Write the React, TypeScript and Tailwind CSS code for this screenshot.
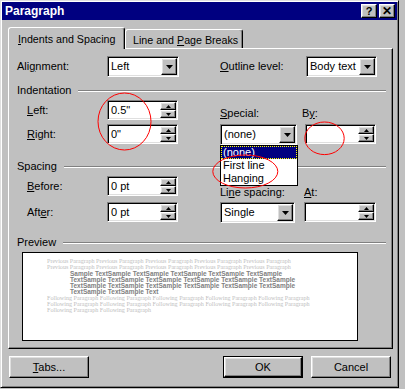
import React from 'react';

const raised =
  'border border-t-white border-l-white border-r-black border-b-black shadow-[inset_-1px_-1px_0_#808080,inset_1px_1px_0_#dfdfdf] bg-[#c0c0c0]';
const sunken =
  'border border-t-[#808080] border-l-[#808080] border-r-white border-b-white shadow-[inset_1px_1px_0_#000,inset_-1px_-1px_0_#dfdfdf] bg-white';

const DownArrow = () => (
  <svg width="7" height="4" viewBox="0 0 7 4">
    <polygon points="0,0 7,0 3.5,4" fill="#000" />
  </svg>
);

const SpinArrow = ({ up }: { up?: boolean }) => (
  <svg width="5" height="3" viewBox="0 0 5 3">
    <polygon points={up ? '0,3 5,3 2.5,0' : '0,0 5,0 2.5,3'} fill="#000" />
  </svg>
);

function Combo({ w, value }: { w: string; value: string }) {
  return (
    <div className={`${w} h-[21px] ${sunken} flex p-px`}>
      <span className="flex-1 pl-[2px] leading-[17px] whitespace-nowrap">{value}</span>
      <span className={`w-4 ${raised} flex items-center justify-center`}>
        <DownArrow />
      </span>
    </div>
  );
}

function Spin({ w, value }: { w: string; value: string }) {
  return (
    <div className={`${w} h-[20px] ${sunken} flex p-px`}>
      <span className="flex-1 pl-[2px] leading-[16px] whitespace-nowrap">{value}</span>
      <div className="w-4 flex flex-col">
        <span className={`flex-1 ${raised} flex items-center justify-center`}>
          <SpinArrow up />
        </span>
        <span className={`flex-1 ${raised} flex items-center justify-center`}>
          <SpinArrow />
        </span>
      </div>
    </div>
  );
}

function GroupHeader({ label }: { label: string }) {
  return (
    <div className="h-[13px] flex items-center pl-2 pr-[6px]">
      <span className="leading-[13px] pr-[7px]">{label}</span>
      <div className="flex-1 h-[2px] border-t border-t-[#808080] border-b border-b-white" />
    </div>
  );
}

const prevLine = 'Previous Paragraph Previous Paragraph Previous Paragraph Previous Paragraph Previous Paragraph';
const followLine = 'Following Paragraph Following Paragraph Following Paragraph Following Paragraph Following Paragraph';

export default function App() {
  return (
    <div className="relative w-[405px] h-[389px] bg-[#c0c0c0] text-black text-[11px] font-['Liberation_Sans',Arial,sans-serif] overflow-hidden">
      {/* window */}
      <div className="w-[399px] h-[388px] border border-t-[#dfdfdf] border-l-[#dfdfdf] border-r-black border-b-black shadow-[inset_1px_1px_0_#fff,inset_-1px_-1px_0_#808080] p-px flex flex-col">
        {/* title bar */}
        <div className="h-[18px] bg-[#000080] flex items-center pl-[3px] pr-[2px]">
          <span className="flex-1 text-white font-bold text-[12px] leading-[18px]">Paragraph</span>
          <span className={`w-4 h-[14px] ${raised} flex items-center justify-center font-bold text-[11px] leading-none`}>?</span>
          <span className={`w-4 h-[14px] ml-[2px] ${raised} flex items-center justify-center font-bold text-[12px] leading-none`}>✕</span>
        </div>

        <div className="flex-1 flex flex-col pl-[6px]">
          {/* tabs */}
          <div className="mt-[7px] h-[21px] flex items-end">
            <div className="relative z-10 w-[117px] h-[22px] -mb-px bg-[#c0c0c0] border-t border-l border-t-white border-l-white border-r border-r-black shadow-[inset_-1px_0_0_#808080] rounded-t-[3px] pl-[9px] pt-[5px] leading-[13px] text-[10.7px]">
              <u>I</u>ndents and Spacing
            </div>
            <div className="w-[118px] h-[19px] border-t border-l border-t-white border-l-white border-r border-r-black shadow-[inset_-1px_0_0_#808080] rounded-t-[3px] pl-[7px] pt-[4px] leading-[13px] text-[10.7px]">
              Line and <u>P</u>age Breaks
            </div>
          </div>

          {/* tab panel */}
          <div className="w-[385px] h-[301px] border border-t-white border-l-white border-r-black border-b-black shadow-[inset_-1px_-1px_0_#808080] flex flex-col">
            {/* alignment row */}
            <div className="mt-[7px] flex items-center pl-2">
              <span className="w-[90px]">Ali<u>g</u>nment:</span>
              <Combo w="w-[72px]" value="Left" />
              <span className="ml-[41px] w-[86px]"><u>O</u>utline level:</span>
              <Combo w="w-[71px]" value="Body text" />
            </div>

            {/* indentation */}
            <div className="mt-[7px]">
              <GroupHeader label="Indentation" />
            </div>
            <div className="mt-[3px] flex">
              <div className="flex flex-col gap-1 pl-[18px]">
                <div className="flex items-center">
                  <span className="w-[80px]"><u>L</u>eft:</span>
                  <Spin w="w-[71px]" value={'0.5"'} />
                </div>
                <div className="flex items-center">
                  <span className="w-[80px]"><u>R</u>ight:</span>
                  <Spin w="w-[71px]" value={'0"'} />
                </div>
              </div>
              <div className="ml-[42px] flex">
                <div className="relative w-[77px] flex flex-col">
                  <span className="h-[24px] flex items-end pb-1 leading-[13px]"><u>S</u>pecial:</span>
                  <Combo w="w-[77px]" value="(none)" />
                  {/* open dropdown list */}
                  <div className="absolute left-0 top-[45px] z-20 w-[78px] bg-white border border-black flex flex-col">
                    <span className="h-[13px] leading-[13px] pl-[2px] bg-[#000080] text-white outline-1 outline-dotted outline-[#ffff00] -outline-offset-1">(none)</span>
                    <span className="h-[13px] leading-[13px] pl-[2px]">First line</span>
                    <span className="h-[13px] leading-[13px] pl-[2px]">Hanging</span>
                  </div>
                </div>
                <div className="ml-2 w-[71px] flex flex-col">
                  <span className="h-[24px] flex items-end pb-1 -ml-[3px] leading-[13px]">B<u>y</u>:</span>
                  <Spin w="w-[71px]" value="" />
                </div>
              </div>
            </div>

            {/* spacing */}
            <div className="mt-[15px]">
              <GroupHeader label="Spacing" />
            </div>
            <div className="mt-[3px] flex">
              <div className="flex flex-col gap-[6px] pl-[18px]">
                <div className="flex items-center">
                  <span className="w-[80px]"><u>B</u>efore:</span>
                  <Spin w="w-[71px]" value="0 pt" />
                </div>
                <div className="flex items-center">
                  <span className="w-[80px]">Aft<u>e</u>r:</span>
                  <Spin w="w-[71px]" value="0 pt" />
                </div>
              </div>
              <div className="ml-[42px] flex">
                <div className="w-[75px] flex flex-col">
                  <span className="h-[26px] flex items-end pb-[3px] leading-[13px]">Li<u>n</u>e spacing:</span>
                  <Combo w="w-[75px]" value="Single" />
                </div>
                <div className="ml-[9px] w-[72px] flex flex-col">
                  <span className="h-[26px] flex items-end pb-[3px] leading-[13px]"><u>A</u>t:</span>
                  <Spin w="w-[72px]" value="" />
                </div>
              </div>
            </div>

            {/* preview */}
            <div className="mt-[13px]">
              <GroupHeader label="Preview" />
            </div>
            <div className="mt-[3px] ml-[13px] w-[336px] h-[89px] bg-white border border-black pl-[24px] pt-[5px] overflow-hidden whitespace-nowrap">
              <div className="text-[6.1px] leading-[6px] text-[#c0c0c0] font-['Liberation_Serif',serif]">
                <div>{prevLine}</div>
                <div>{prevLine}</div>
              </div>
              <div className="pl-[23px] mt-px text-[6.5px] leading-[6px] font-bold text-[#808080]">
                <div>Sample TextSample TextSample TextSample TextSample TextSample</div>
                <div>TextSample TextSample TextSample TextSample TextSample TextSample</div>
                <div>TextSample TextSample TextSample TextSample TextSample TextSample</div>
                <div>TextSample TextSample Text</div>
              </div>
              <div className="text-[6.1px] leading-[6px] text-[#c0c0c0] font-['Liberation_Serif',serif]">
                <div>{followLine}</div>
                <div>{followLine}</div>
                <div>Following Paragraph Following Paragraph</div>
              </div>
            </div>
          </div>

          {/* buttons */}
          <div className="mt-[7px] flex">
            <button className={`ml-px w-[80px] h-[22px] ${raised}`}>
              <u>T</u>abs...
            </button>
            <button className="ml-[134px] w-[80px] h-[22px] border border-black">
              <span className={`block w-full h-full ${raised} leading-[18px]`}>OK</span>
            </button>
            <button className={`ml-2 w-[80px] h-[22px] ${raised}`}>Cancel</button>
          </div>
        </div>
      </div>

      {/* red annotation ellipses */}
      <svg className="absolute inset-0 pointer-events-none z-30" width="405" height="389">
        <ellipse cx="124.5" cy="121.5" rx="26.5" ry="28.5" fill="none" stroke="#ff0000" strokeWidth="1" />
        <ellipse cx="324.5" cy="138.3" rx="19.7" ry="16.3" fill="none" stroke="#ff0000" strokeWidth="1" />
        <ellipse cx="245.3" cy="171.5" rx="32.5" ry="16.5" fill="none" stroke="#ff0000" strokeWidth="1" />
      </svg>
    </div>
  );
}
